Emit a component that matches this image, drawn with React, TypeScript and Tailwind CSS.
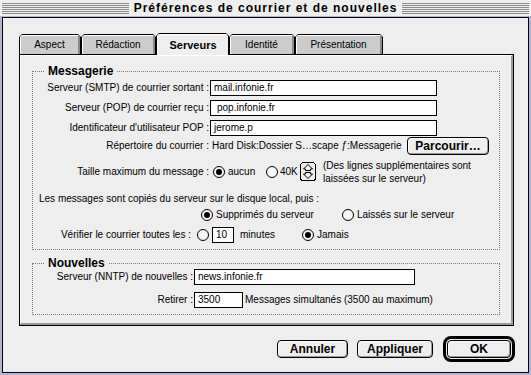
import React from "react";

const Radio = ({ on }: { on?: boolean }) => (
  <span className="flex h-[12px] w-[12px] shrink-0 items-center justify-center rounded-full border border-black bg-[#f6f6f6]">
    {on && <span className="h-[6px] w-[6px] rounded-full bg-black" />}
  </span>
);

const Field = ({ cls, children }: { cls: string; children: React.ReactNode }) => (
  <div className={`flex h-[16px] items-center border border-black bg-white px-[3px] ${cls}`}>{children}</div>
);

function Tab({ label, w, selected }: { label: string; w: string; selected?: boolean }) {
  return (
    <div
      className={`relative ${w} ${
        selected ? "z-10 h-[22px]" : "h-[21px]"
      } bg-black [clip-path:polygon(3px_0,calc(100%_-_3px)_0,100%_3px,100%_100%,0_100%,0_3px)]`}
    >
      <div
        className={`absolute left-[1px] right-[1px] top-[1px] flex items-center justify-center [clip-path:polygon(2px_0,calc(100%_-_2px)_0,100%_2px,100%_100%,0_100%,0_2px)] ${
          selected
            ? "bottom-0 border-l border-t border-l-white border-t-white bg-[#eeeeee] text-[11px] font-bold"
            : "bottom-[1px] border-l border-r-2 border-t border-l-white border-r-[#8a8a8a] border-t-white bg-[#cccccc] text-[10px]"
        }`}
      >
        {label}
      </div>
    </div>
  );
}

function Group({ title, cls, children }: { title: string; cls: string; children: React.ReactNode }) {
  return (
    <div className={`relative flex w-[468px] flex-col border border-dotted border-[#7a7a7a] ${cls}`}>
      <span className="absolute left-[12px] top-[-8px] bg-[#eeeeee] px-[3px] text-[12px] font-bold leading-[14px]">
        {title}
      </span>
      {children}
    </div>
  );
}

const Stepper = () => (
  <svg width="16" height="19" viewBox="0 0 16 19" className="shrink-0" shapeRendering="crispEdges">
    <rect x="0.5" y="0.5" width="15" height="18" rx="3" fill="#eeeeee" stroke="black" />
    <path d="M8 2.5 L12.5 7 L10.5 7 L10.5 8.5 L5.5 8.5 L5.5 7 L3.5 7 Z" fill="none" stroke="black" shapeRendering="auto" />
    <path d="M8 16.5 L12.5 12 L10.5 12 L10.5 10.5 L5.5 10.5 L5.5 12 L3.5 12 Z" fill="none" stroke="black" shapeRendering="auto" />
  </svg>
);

const btn =
  "flex h-[18px] items-center justify-center rounded-[4px] border border-black bg-[#eeeeee] text-[12px] font-bold shadow-[inset_1px_1px_0_#ffffff,inset_-1px_-1px_0_#9a9a9a]";

export default function App() {
  return (
    <div className="flex h-[375px] w-[531px] flex-col overflow-hidden bg-[#eeeeee] font-['Liberation_Sans',Arial,sans-serif] text-[10px] leading-[12px] text-black">
      {/* title bar */}
      <div className="flex h-[16px] shrink-0 items-center px-[2px]">
        <div className="h-[11px] flex-1 bg-[repeating-linear-gradient(to_bottom,#8a8a8a_0px,#8a8a8a_1px,#eeeeee_1px,#eeeeee_2px)]" />
        <div className="px-[5px] text-[12px] font-bold leading-[14px] tracking-[1px]">
          Préférences de courrier et de nouvelles
        </div>
        <div className="h-[11px] flex-1 bg-[repeating-linear-gradient(to_bottom,#8a8a8a_0px,#8a8a8a_1px,#eeeeee_1px,#eeeeee_2px)]" />
      </div>
      {/* frame */}
      <div className="flex flex-1 flex-col border-x-2 border-b-2 border-t border-[#b4b4d4]">
        <div className="flex flex-1 flex-col border border-black px-[16px] pr-[13px] pt-[16px]">
          {/* tabs */}
          <div className="relative z-10 -mb-[1px] flex h-[21px] items-end">
            <Tab label="Aspect" w="w-[62px]" />
            <Tab label="Rédaction" w="w-[75px]" />
            <Tab label="Serveurs" w="w-[73px]" selected />
            <Tab label="Identité" w="w-[66px]" />
            <Tab label="Présentation" w="w-[88px]" />
          </div>
          {/* panel */}
          <div className="mr-[1px] h-[272px] border border-black bg-[#eeeeee]">
            <div className="flex h-full flex-col border-b-2 border-l border-r-2 border-t border-b-[#9a9a9a] border-l-white border-r-[#9a9a9a] border-t-white pl-[11px]">
              <Group title="Messagerie" cls="mt-[15px] h-[179px]">
                <div className="mt-[8px] flex h-[16px] items-center">
                  <span className="w-[176px] text-right">Serveur (SMTP) de courrier sortant :</span>
                  <Field cls="ml-[1px] w-[227px]">mail.infonie.fr</Field>
                </div>
                <div className="mt-[4px] flex h-[16px] items-center">
                  <span className="w-[176px] text-right">Serveur (POP) de courrier reçu :</span>
                  <Field cls="ml-[1px] w-[227px] pl-[6px]">pop.infonie.fr</Field>
                </div>
                <div className="mt-[4px] flex h-[16px] items-center">
                  <span className="w-[176px] text-right">Identificateur d'utilisateur POP :</span>
                  <Field cls="ml-[1px] w-[227px]">jerome.p</Field>
                </div>
                <div className="mt-[2px] flex h-[16px] items-center">
                  <span className="w-[176px] text-right">Répertoire du courrier :</span>
                  <span className="ml-[3px]">Hard Disk:Dossier S…scape ƒ:Messagerie</span>
                  <div className={`${btn} ml-auto mr-[10px] h-[16px] w-[82px]`}>Parcourir…</div>
                </div>
                <div className="mt-[8px] flex h-[19px] items-center">
                  <span className="w-[176px] text-right">Taille maximum du message :</span>
                  <div className="ml-[4px] flex w-[53px] items-center">
                    <Radio on />
                    <span className="ml-[3px]">aucun</span>
                  </div>
                  <div className="flex w-[34px] items-center">
                    <Radio />
                    <span className="ml-[2px]">40K</span>
                  </div>
                  <Stepper />
                  <div className="ml-[7px] leading-[13px]">
                    (Des lignes supplémentaires sont
                    <br />
                    laissées sur le serveur)
                  </div>
                </div>
                <div className="mt-[11px] flex h-[13px] items-center pl-[6px]">
                  Les messages sont copiés du serveur sur le disque local, puis :
                </div>
                <div className="mt-[3px] flex h-[14px] items-center pl-[168px]">
                  <div className="flex w-[141px] items-center">
                    <Radio on />
                    <span className="ml-[3px]">Supprimés du serveur</span>
                  </div>
                  <Radio />
                  <span className="ml-[3px]">Laissés sur le serveur</span>
                </div>
                <div className="mt-[5px] flex h-[16px] items-center">
                  <span className="w-[158px] text-right">Vérifier le courrier toutes les :</span>
                  <span className="ml-[6px]">
                    <Radio />
                  </span>
                  <Field cls="ml-[3px] w-[22px]">10</Field>
                  <span className="ml-[6px] w-[62px]">minutes</span>
                  <Radio on />
                  <span className="ml-[3px]">Jamais</span>
                </div>
              </Group>
              <Group title="Nouvelles" cls="mt-[13px] h-[52px]">
                <div className="mt-[5px] flex h-[16px] items-center">
                  <span className="w-[160px] text-right">Serveur (NNTP) de nouvelles :</span>
                  <Field cls="ml-[1px] w-[221px]">news.infonie.fr</Field>
                </div>
                <div className="mt-[7px] flex h-[16px] items-center">
                  <span className="w-[160px] text-right">Retirer :</span>
                  <Field cls="ml-[1px] w-[49px]">3500</Field>
                  <span className="ml-[2px]">Messages simultanés (3500 au maximum)</span>
                </div>
              </Group>
            </div>
          </div>
          {/* buttons */}
          <div className="mt-[10px] flex h-[26px] items-center justify-end">
            <div className={`${btn} mr-[9px] w-[71px]`}>Annuler</div>
            <div className={`${btn} mr-[10px] w-[76px]`}>Appliquer</div>
            <div className="flex h-[26px] w-[72px] items-center justify-center rounded-[8px] border-[3px] border-black p-[1px]">
              <div className={`${btn} w-full`}>OK</div>
            </div>
          </div>
        </div>
      </div>
    </div>
  );
}
